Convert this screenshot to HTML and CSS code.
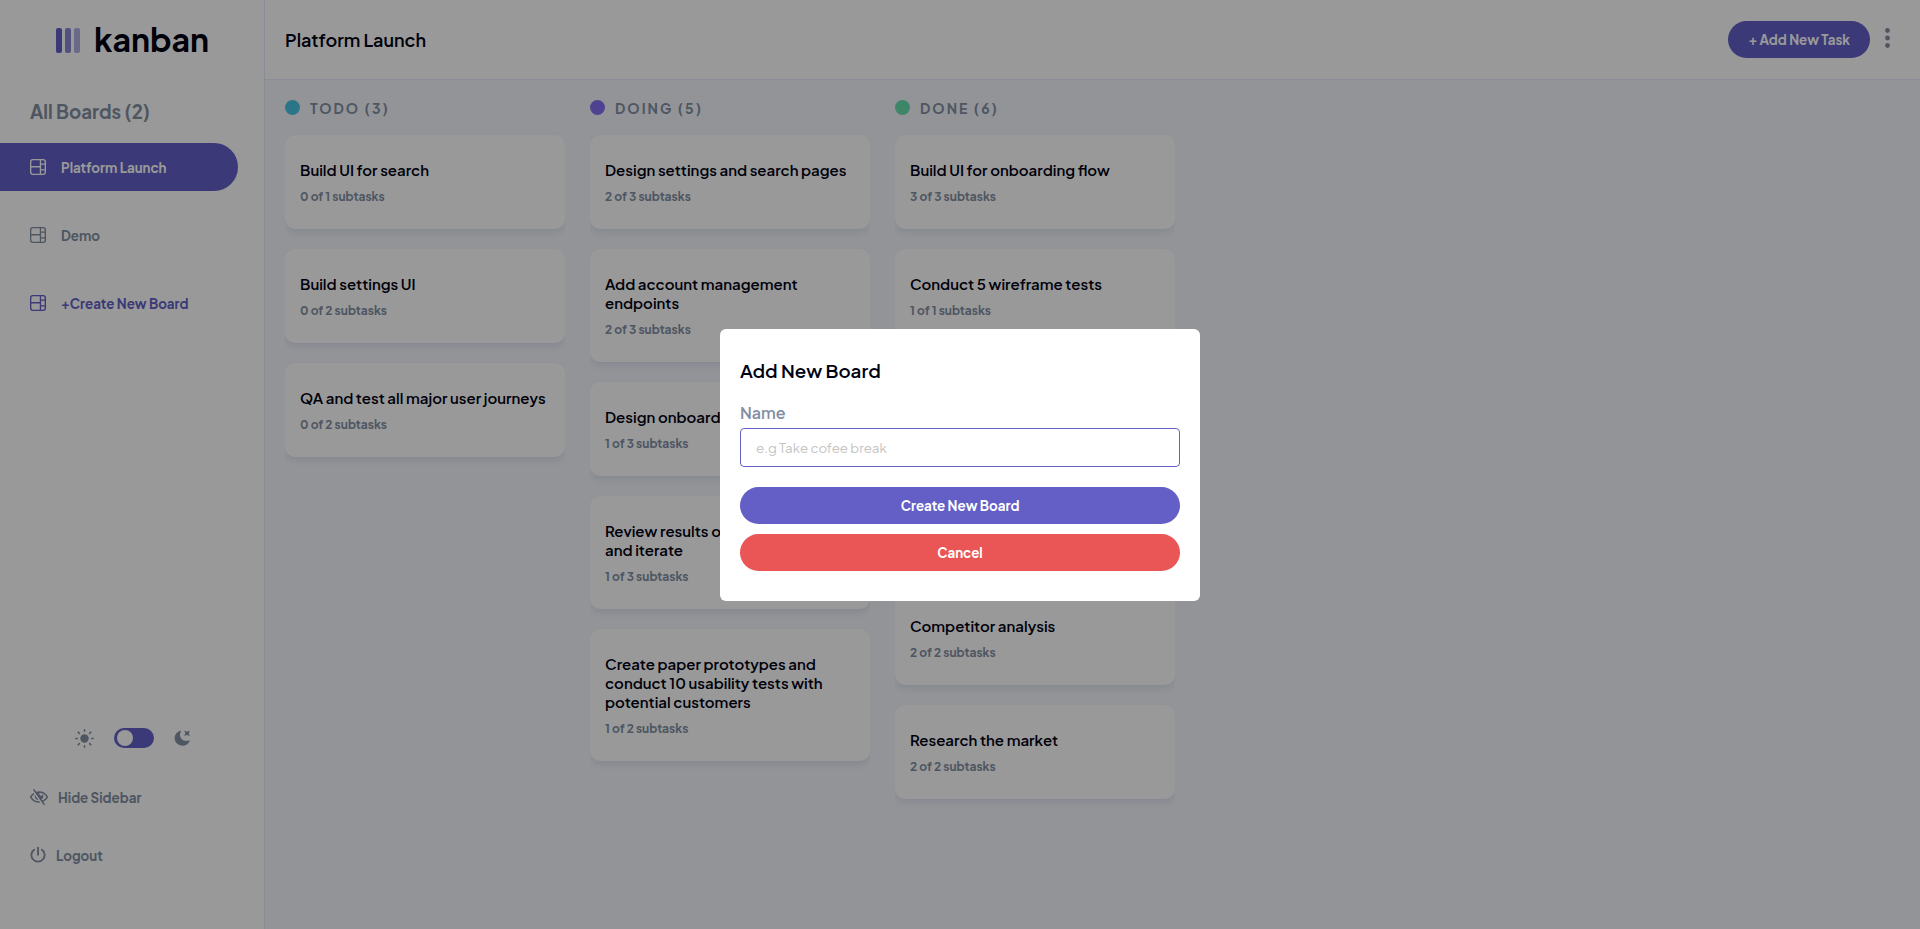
FILE: index.html
```html
<!DOCTYPE html>
<html lang="en">
<head>
<meta charset="utf-8">
<meta name="viewport" content="width=device-width, initial-scale=1">
<title>Kanban</title>
<link rel="stylesheet" href="styles.css">
</head>
<body>
<svg class="sprite" aria-hidden="true">
  <symbol id="icon-board" viewBox="0 0 16 16"><path d="M0 2.889A2.889 2.889 0 0 1 2.889 0H13.11A2.889 2.889 0 0 1 16 2.889V13.11A2.888 2.888 0 0 1 13.111 16H2.89A2.889 2.889 0 0 1 0 13.111V2.89Zm1.333 5.555v4.667c0 .859.697 1.556 1.556 1.556h6.889V8.444H1.333Zm8.445-1.333V1.333h-6.89A1.556 1.556 0 0 0 1.334 2.89V7.11h8.445Zm4.889-1.333H11.11v4.444h3.556V5.778Zm0 5.778H11.11v3.11h2a1.556 1.556 0 0 0 1.556-1.555v-1.555Zm0-7.112V2.89a1.555 1.555 0 0 0-1.556-1.556h-2v3.111h3.556Z"/></symbol>
</svg>
<div class="app">
  <aside class="sidebar">
    <div class="logo">
      <svg class="logo-mark" width="24" height="25" viewBox="0 0 24 25" fill="#635fc7" aria-hidden="true"><rect width="6" height="25" rx="2"/><rect x="9" width="6" height="25" rx="2" opacity=".75"/><rect x="18" width="6" height="25" rx="2" opacity=".5"/></svg>
      <span class="logo-text">kanban</span>
    </div>
    <h3 class="boards-title">All Boards (2)</h3>
    <nav class="boards">
      <button class="board-link active" type="button"><svg class="icon"><use href="#icon-board"/></svg>Platform Launch</button>
      <button class="board-link" type="button"><svg class="icon"><use href="#icon-board"/></svg>Demo</button>
      <button class="board-link create" type="button"><svg class="icon"><use href="#icon-board"/></svg>+Create New Board</button>
    </nav>
    <div class="theme">
      <svg width="19" height="19" viewBox="0 0 19 19" aria-hidden="true"><circle cx="9.500" cy="9.500" r="4.200" fill="currentColor"/><path d="M9.500 .8v1.400M9.500 16.800v1.400M.8 9.500h1.400M16.800 9.500h1.400M3.200 3.200l1.200 1.200M14.600 14.600l1.200 1.200M3.200 15.800l1.200-1.200M14.600 4.400l1.200-1.200" stroke="currentColor" stroke-width="1.600" stroke-linecap="round"/></svg>
      <input class="switch" type="checkbox" role="switch" aria-label="Dark mode">
      <svg width="16" height="16" viewBox="0 0 16 16" fill="currentColor" aria-hidden="true"><path d="M6.474.682c.434-.11.718.406.481.78A6.067 6.067 0 0 0 6.01 4.72c0 3.418 2.827 6.187 6.314 6.187.89.002 1.77-.182 2.584-.54.408-.18.894.165.724.57-1.16 2.775-3.944 4.73-7.194 4.73-4.292 0-7.771-3.41-7.771-7.615 0-3.541 2.466-6.518 5.807-7.37Zm8.433.07c.442-.294.969.232.674.674l-.525.787a1.943 1.943 0 0 0 0 2.157l.525.788c.295.441-.232.968-.674.673l-.787-.525a1.943 1.943 0 0 0-2.157 0l-.786.525c-.442.295-.97-.232-.675-.673l.525-.788a1.943 1.943 0 0 0 0-2.157l-.525-.787c-.295-.442.232-.968.674-.673l.787.525a1.943 1.943 0 0 0 2.157 0l.787-.526Z"/></svg>
    </div>
    <button class="side-action" type="button"><svg width="18" height="16" viewBox="0 0 18 16" fill="currentColor" aria-hidden="true"><path d="M8.522 11.223a4.252 4.252 0 0 1-3.654-5.22l3.654 5.22ZM9 12.25A8.685 8.685 0 0 1 1.500 8a8.612 8.612 0 0 1 2.760-2.864l-.86-1.230A10.112 10.112 0 0 0 .208 7.238a1.500 1.500 0 0 0 0 1.524A10.187 10.187 0 0 0 9 13.750c.414 0 .828-.025 1.239-.074l-1-1.430A8.880 8.880 0 0 1 9 12.250Zm8.792-3.488a10.140 10.140 0 0 1-4.486 4.046l1.504 2.148a.375.375 0 0 1-.092.523l-.648.453a.375.375 0 0 1-.523-.092L3.190 1.044A.375.375 0 0 1 3.282.52L3.930.068a.375.375 0 0 1 .523.092l1.735 2.479A10.308 10.308 0 0 1 9 2.250c3.746 0 7.031 2 8.792 4.988a1.500 1.500 0 0 1 0 1.524ZM16.500 8a8.674 8.674 0 0 0-6.755-4.219A1.750 1.750 0 1 0 12.750 5v-.001a4.250 4.250 0 0 1-1.154 5.366l.834 1.192A8.641 8.641 0 0 0 16.500 8Z"/></svg><span>Hide Sidebar</span></button>
    <button class="side-action" type="button"><svg width="16" height="16" viewBox="0 0 16 16" fill="none" stroke="currentColor" stroke-width="1.800" aria-hidden="true"><path d="M8 0v8.500M4.800 2.300a6.600 6.600 0 1 0 6.400 0"/></svg><span>Logout</span></button>
  </aside>
  <div class="content">
    <header class="topbar">
      <h1 class="board-name">Platform Launch</h1>
      <button class="btn add-task" type="button">+ Add New Task</button>
      <button class="menu" type="button" aria-label="Board menu"><svg width="5" height="20" viewBox="0 0 5 20" fill="currentColor"><circle cx="2.500" cy="2.500" r="2.400"/><circle cx="2.500" cy="10" r="2.400"/><circle cx="2.500" cy="17.500" r="2.400"/></svg></button>
    </header>
    <main class="columns">
      <section class="column">
        <h2 class="column-title"><span class="dot todo"></span>TODO (3)</h2>
        <article class="card"><h3>Build UI for search</h3><p>0 of 1 subtasks</p></article>
        <article class="card"><h3>Build settings UI</h3><p>0 of 2 subtasks</p></article>
        <article class="card"><h3>QA and test all major user journeys</h3><p>0 of 2 subtasks</p></article>
      </section>
      <section class="column">
        <h2 class="column-title"><span class="dot doing"></span>DOING (5)</h2>
        <article class="card"><h3>Design settings and search pages</h3><p>2 of 3 subtasks</p></article>
        <article class="card"><h3>Add account management endpoints</h3><p>2 of 3 subtasks</p></article>
        <article class="card"><h3>Design onboarding flow</h3><p>1 of 3 subtasks</p></article>
        <article class="card"><h3>Review results of usability tests and iterate</h3><p>1 of 3 subtasks</p></article>
        <article class="card"><h3>Create paper prototypes and conduct 10 usability tests with potential customers</h3><p>1 of 2 subtasks</p></article>
      </section>
      <section class="column">
        <h2 class="column-title"><span class="dot done"></span>DONE (6)</h2>
        <article class="card"><h3>Build UI for onboarding flow</h3><p>3 of 3 subtasks</p></article>
        <article class="card"><h3>Conduct 5 wireframe tests</h3><p>1 of 1 subtasks</p></article>
        <article class="card"><h3>Create wireframe prototype</h3><p>1 of 1 subtasks</p></article>
        <article class="card"><h3>Review usability results</h3><p>2 of 2 subtasks</p></article>
        <article class="card"><h3>Competitor analysis</h3><p>2 of 2 subtasks</p></article>
        <article class="card"><h3>Research the market</h3><p>2 of 2 subtasks</p></article>
      </section>
    </main>
  </div>
</div>
<div class="overlay">
  <form class="modal" role="dialog" aria-modal="true" aria-labelledby="modal-title">
    <h3 class="modal-title" id="modal-title">Add New Board</h3>
    <label class="label" for="board-input">Name</label>
    <input class="text-input" id="board-input" type="text" placeholder="e.g Take cofee break">
    <button class="btn" type="submit">Create New Board</button>
    <button class="btn danger" type="button">Cancel</button>
  </form>
</div>
</body>
</html>
```

FILE: styles.css
```css
:root {
  --purple: #635fc7;
  --grey: #828fa3;
  --line: #e4ebfa;
  --ink: #000112;
}

* {
  box-sizing: border-box;
  margin: 0;
}

body {
  font-family: "Plus Jakarta Sans", Inter, sans-serif;
  color: var(--ink);
  background: #f4f7fd;
}

button,
input {
  font-family: inherit;
}

button {
  border: 0;
  background: none;
  cursor: pointer;
}

.sprite {
  display: none;
}

.app {
  display: flex;
  min-height: 100vh;
}

.sidebar {
  display: flex;
  flex: 0 0 265px;
  flex-direction: column;
  padding-bottom: 59px;
  background: #fff;
  border-right: 1px solid var(--line);
  color: var(--grey);
}

.logo {
  display: flex;
  align-items: center;
  gap: 14px;
  height: 80px;
  padding-left: 56px;
}

.logo-text {
  padding-bottom: 2px;
  font-size: 32px;
  font-weight: 700;
  line-height: 40px;
  color: var(--ink);
}

.boards-title {
  margin: 19px 0;
  padding-left: 30px;
  font-weight: 700;
  line-height: 25px;
}

.boards {
  display: flex;
  flex-direction: column;
  gap: 20px;
  margin-right: 26px;
}

.board-link {
  display: flex;
  align-items: center;
  gap: 15px;
  height: 48px;
  padding: 0 30px;
  border-radius: 0 24px 24px 0;
  font-weight: 700;
  color: var(--grey);
}

.board-link.active {
  background: var(--purple);
  color: #fff;
}

.board-link.create {
  color: var(--purple);
}

.icon {
  width: 16px;
  height: 16px;
  fill: currentColor;
}

.theme {
  display: flex;
  align-items: center;
  justify-content: center;
  gap: 20px;
  margin-top: auto;
  margin-bottom: 34px;
}

.switch {
  appearance: none;
  width: 40px;
  height: 20px;
  padding: 2px 3px;
  border-radius: 10px;
  background: var(--purple);
}

.switch::before {
  content: "";
  display: block;
  width: 16px;
  height: 16px;
  border-radius: 50%;
  background: #fff;
}

.side-action {
  display: flex;
  align-items: center;
  gap: 10px;
  height: 30px;
  margin-bottom: 28px;
  padding: 0 30px;
  font-weight: 700;
  color: var(--grey);
}

.side-action:last-child {
  margin-bottom: 0;
}

.content {
  flex: 1;
  min-width: 0;
}

.topbar {
  display: flex;
  align-items: center;
  height: 80px;
  padding: 0 30px 0 20px;
  background: #fff;
  border-bottom: 1px solid var(--line);
}

.board-name {
  flex: 1;
  font-size: 18px;
  font-weight: 600;
}

.btn {
  height: 37px;
  padding: 0 20px;
  border-radius: 20px;
  background: var(--purple);
  font-weight: 700;
  color: #fff;
}

.btn.danger {
  background: #ea5555;
}

.menu {
  display: flex;
  margin-left: 15px;
  padding: 0 0 4px;
  color: var(--grey);
}

.columns {
  display: flex;
  align-items: flex-start;
  gap: 25px;
  padding: 20px;
}

.column {
  display: flex;
  flex: 0 0 280px;
  flex-direction: column;
  gap: 20px;
  padding-bottom: 20px;
  overflow: hidden;
}

.column-title {
  display: flex;
  align-items: center;
  gap: 10px;
  height: 15px;
  font-size: 14px;
  font-weight: 700;
  letter-spacing: 2px;
  color: var(--grey);
}

.dot {
  width: 15px;
  height: 15px;
  border-radius: 50%;
}

.todo {
  background: #49c4e5;
}

.doing {
  background: #8471f2;
}

.done {
  background: #67e2ae;
}

.card {
  padding: 25px 15px;
  border-radius: 10px;
  background: #fff;
  box-shadow: 0 4px 6px rgba(54, 78, 126, 0.1);
}

.card h3 {
  font-size: 15px;
  font-weight: 600;
  line-height: 19px;
}

.card p {
  margin-top: 10px;
  font-size: 12px;
  font-weight: 700;
  line-height: 15px;
  color: var(--grey);
}

.overlay {
  position: fixed;
  inset: 0;
  display: flex;
  align-items: center;
  justify-content: center;
  padding-top: 1px;
  background: rgba(0, 0, 0, 0.4);
}

.modal {
  display: flex;
  flex-direction: column;
  width: 480px;
  max-width: 100%;
  padding: 29px 20px 30px;
  border-radius: 6px;
  background: #fff;
}

.modal-title {
  font-weight: 600;
  line-height: 25px;
}

.label {
  margin: 20px 0 5px;
  font-size: 16px;
  font-weight: 600;
  line-height: 20px;
  color: var(--grey);
}

.text-input {
  height: 39px;
  margin-bottom: 20px;
  padding: 0 15px;
  border: 1px solid var(--purple);
  border-radius: 4px;
  outline: 0;
}

.text-input::placeholder {
  color: #c4c4c4;
}

.modal .danger {
  margin-top: 10px;
}
```
